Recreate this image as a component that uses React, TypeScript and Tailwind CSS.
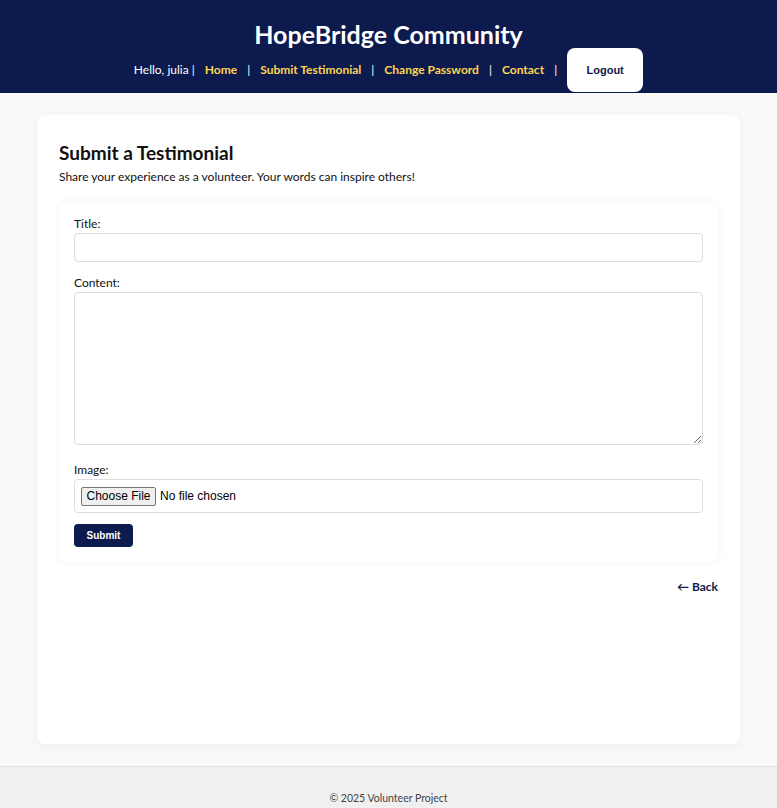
export default function App() {
  return (
    <div
      className="min-h-screen bg-[#f9f9f9] text-[#111]"
      style={{ fontFamily: 'Lato, "Noto Sans", sans-serif' }}
    >
      <header className="bg-[#0c1a4d] pt-[19px] pb-[1px] text-center">
        <h1 className="text-[25px] font-bold leading-[30px] text-white">HopeBridge Community</h1>
        <nav className="mt-[-1px] flex items-center justify-center text-[12px]">
          <span className="text-white">Hello, julia |</span>
          <a className="mx-[10px] font-bold text-[#ffd54f]">Home</a>
          <span className="text-white">|</span>
          <a className="mx-[10px] font-bold text-[#ffd54f]">Submit Testimonial</a>
          <span className="text-white">|</span>
          <a className="mx-[10px] font-bold text-[#ffd54f]">Change Password</a>
          <span className="text-white">|</span>
          <a className="mx-[10px] font-bold text-[#ffd54f]">Contact</a>
          <span className="text-white">|</span>
          <button
            type="button"
            className="ml-[10px] h-[44px] w-[76px] rounded-[8px] bg-white text-[11px] font-bold text-[#0c1a4d]"
            style={{ fontFamily: '"Liberation Sans", Arial, sans-serif' }}
          >
            Logout
          </button>
        </nav>
      </header>

      <main className="mx-[37px] mt-[22px] min-h-[629px] rounded-[8px] bg-white px-[22px] pt-[26px] pb-[22px] shadow-[0_2px_10px_rgba(0,0,0,0.05)]">
        <h2 className="text-[19px] font-bold leading-[24px]">Submit a Testimonial</h2>
        <p className="mt-[3px] text-[12px] leading-[18px]">
          Share your experience as a volunteer. Your words can inspire others!
        </p>

        <form className="mt-[15px] rounded-[8px] bg-white p-[15px] pt-[14px] shadow-[0_0_8px_rgba(0,0,0,0.05)]">
          <label className="block text-[12px] leading-[18px]">Title:</label>
          <input
            type="text"
            className="block h-[29px] w-full rounded-[4px] border border-[#ddd] px-2 text-[13px] outline-none"
          />
          <label className="mt-[12px] block text-[12px] leading-[18px]">Content:</label>
          <textarea className="block h-[153px] w-full rounded-[4px] border border-[#ddd] px-2 text-[13px] outline-none" />
          <label className="mt-[16px] block text-[12px] leading-[18px]">Image:</label>
          <div
            className="flex h-[34px] w-full items-center rounded-[4px] border border-[#ddd] px-[6px] text-[12px]"
            style={{ fontFamily: '"Liberation Sans", Arial, sans-serif' }}
          >
            <span className="flex h-[19px] w-[75px] items-center justify-center rounded-[2px] border border-[#767676] bg-[#efefef] text-black">
              Choose File
            </span>
            <span className="ml-[4px] text-black">No file chosen</span>
          </div>
          <button
            type="submit"
            className="mt-[11px] h-[23px] w-[59px] rounded-[4px] bg-[#0c1a4d] text-[10px] font-bold text-white"
            style={{ fontFamily: '"Liberation Sans", Arial, sans-serif' }}
          >
            Submit
          </button>
        </form>

        <div className="mt-[11px] text-right">
          <a className="text-[12px] font-bold text-[#0c1a4d]">← Back</a>
        </div>
      </main>

      <footer className="mt-[22px] border-t border-[#e3e3e3] bg-[#f0f0f0] pt-[24px] pb-[18px] text-center text-[10.5px] text-[#444]">
        © 2025 Volunteer Project
      </footer>
    </div>
  );
}
